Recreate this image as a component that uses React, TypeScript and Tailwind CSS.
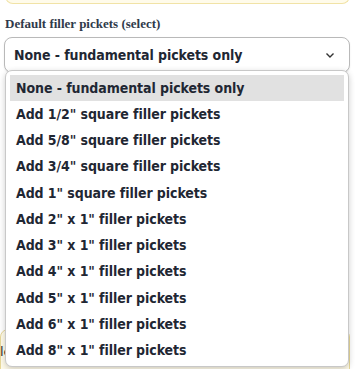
const OPTIONS = [
  "None - fundamental pickets only",
  'Add 1/2" square filler pickets',
  'Add 5/8" square filler pickets',
  'Add 3/4" square filler pickets',
  'Add 1" square filler pickets',
  'Add 2" x 1" filler pickets',
  'Add 3" x 1" filler pickets',
  'Add 4" x 1" filler pickets',
  'Add 5" x 1" filler pickets',
  'Add 6" x 1" filler pickets',
  'Add 8" x 1" filler pickets',
];

const optFont = "text-[14px] font-bold tracking-[-0.08px] text-[#1f2733] font-['DejaVu_Sans_Condensed','DejaVu_Sans',sans-serif]";

export default function App() {
  return (
    <div className="relative w-[355px] h-[369px] overflow-hidden bg-white">
      <div className="h-[3px] -mt-[10px] pt-[10px] mx-[5px] rounded-b-[8px] border border-t-0 border-[#f1e3a6] bg-[#fffbea] box-content" />

      <div className="px-[5px]">
        <div className="mt-[11px] text-[13px] leading-[17px] font-bold text-[#2f3a4a] font-['Liberation_Serif',serif]">
          Default filler pickets (select)
        </div>
        <div className="mt-[5px] -ml-px flex h-[36px] items-center justify-between rounded-[8px] border border-[#b9b9b9] bg-white pl-[9px] pr-[14px] shadow-[0_1px_2px_rgba(0,0,0,0.08)]">
          <span className={optFont}>None - fundamental pickets only</span>
          <svg width="10" height="7" viewBox="0 0 10 7" fill="none">
            <path d="M1.5 1.5 5 5l3.5-3.5" stroke="#333" strokeWidth="1.4" />
          </svg>
        </div>

        <div className="mt-[256px] ml-[-5px] h-[60px] rounded-[8px] border border-[#e8d99a] bg-[#fffbea] pt-[12px] text-[13px] text-[#333] font-['DejaVu_Sans',sans-serif]">
          <span className="ml-[-1px]">le</span>
        </div>
      </div>

      <div className="absolute left-[5px] top-[70px] w-[344px] h-[297px] rounded-[7px] border border-[#c8c8c8] bg-white p-[4px] shadow-[0_2px_6px_rgba(0,0,0,0.2)]">
        {OPTIONS.map((o, i) => (
          <div
            key={o}
            className={`h-[26.25px] flex items-center px-[6px] ${optFont} ${
              i === 0 ? "bg-[#e1e1e1]" : ""
            }`}
          >
            {o}
          </div>
        ))}
      </div>
    </div>
  );
}
